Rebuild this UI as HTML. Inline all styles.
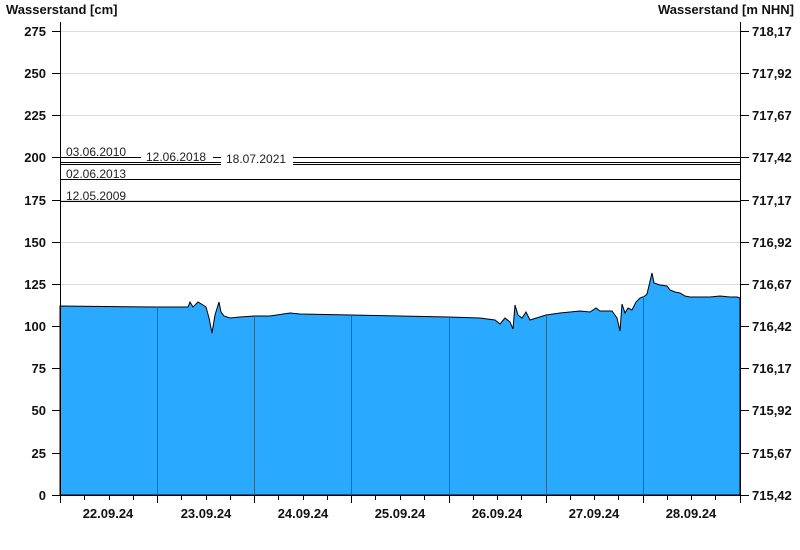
<!DOCTYPE html>
<html><head><meta charset="utf-8"><style>
html,body{margin:0;padding:0;background:#fff;}
svg{display:block;font-family:"Liberation Sans",Arial,sans-serif;}
.t{font-size:13px;font-weight:bold;fill:#111;}
.tt{font-size:13px;font-weight:bold;fill:#111;}
.l{font-size:12px;fill:#222;}
</style></head><body>
<svg width="800" height="550" viewBox="0 0 800 550">
<text x="6" y="14" class="tt">Wasserstand [cm]</text>
<text x="794" y="14" class="tt" text-anchor="end">Wasserstand [m NHN]</text>
<g stroke="#dcdcdc" stroke-width="1">
<line x1="61" y1="31.5" x2="740" y2="31.5"/><line x1="61" y1="73.5" x2="740" y2="73.5"/>
<line x1="61" y1="115.5" x2="740" y2="115.5"/><line x1="61" y1="157.5" x2="740" y2="157.5"/>
<line x1="61" y1="200.5" x2="740" y2="200.5"/><line x1="61" y1="242.5" x2="740" y2="242.5"/>
<line x1="61" y1="284.5" x2="740" y2="284.5"/>
</g>
<path fill="#29a9ff" stroke="#000" stroke-width="1" d="M60,306 L157,307 L188,307 L190,302 L193,307 L198,302 L203,305 L206,307 L209,318 L212,333 L215,315 L219,302 L221,312 L224,316 L230,318 L240,317 L254,316 L270,316 L290,313 L300,314 L351,315 L400,316 L449,317 L480,318 L495,320 L500,324 L505,318 L510,322 L513,329 L515,305 L518,315 L522,318 L526,312 L530,320 L546,315 L560,313 L580,311 L590,312 L596,308 L600,311 L612,311 L617,318 L620,331 L622,304 L625,313 L628,308 L632,310 L636,302 L640,298 L645,296 L647,294 L652,273 L654,283 L660,285 L667,286 L670,290 L675,292 L680,293 L685,296 L690,297 L700,297 L710,297 L720,296 L730,297 L737,297 L740,298 L740,495 L60,495 Z"/>
<g stroke="#1e6a99" stroke-width="1">
<line x1="157.5" y1="307" x2="157.5" y2="495"/><line x1="254.5" y1="316" x2="254.5" y2="495"/>
<line x1="351.5" y1="315" x2="351.5" y2="495"/><line x1="449.5" y1="317" x2="449.5" y2="495"/>
<line x1="546.5" y1="315" x2="546.5" y2="495"/><line x1="643.5" y1="296" x2="643.5" y2="495"/>
</g>
<g stroke="#000" stroke-width="1">
<line x1="61" y1="157.5" x2="740" y2="157.5"/>
<line x1="61" y1="162.5" x2="740" y2="162.5"/>
<line x1="61" y1="164.5" x2="740" y2="164.5"/>
<line x1="61" y1="179.5" x2="740" y2="179.5"/>
<line x1="61" y1="201.5" x2="740" y2="201.5"/>
</g>
<rect x="141" y="150" width="72" height="11" fill="#fff"/>
<rect x="221" y="153" width="72" height="12" fill="#fff"/>
<text x="66" y="156" class="l">03.06.2010</text>
<text x="146" y="161" class="l">12.06.2018</text>
<text x="226" y="163" class="l">18.07.2021</text>
<text x="66" y="178" class="l">02.06.2013</text>
<text x="66" y="200" class="l">12.05.2009</text>
<g stroke="#000" stroke-width="1">
<line x1="60.5" y1="22" x2="60.5" y2="503"/>
<line x1="740.5" y1="22" x2="740.5" y2="495"/>
<line x1="52" y1="495.5" x2="741" y2="495.5"/>
</g>
<g stroke="#000" stroke-width="1">
<path d="M52,31.5h8M52,73.5h8M52,115.5h8M52,157.5h8M52,200.5h8M52,242.5h8M52,284.5h8M52,326.5h8M52,368.5h8M52,410.5h8M52,453.5h8"/>
<path d="M741,31.5h8M741,73.5h8M741,115.5h8M741,157.5h8M741,200.5h8M741,242.5h8M741,284.5h8M741,326.5h8M741,368.5h8M741,410.5h8M741,453.5h8M741,495.5h8"/>
<path d="M157.5,495v8M254.5,495v8M351.5,495v8M449.5,495v8M546.5,495v8M643.5,495v8M740.5,495v8"/>
<path d="M84.5,495v5M109.5,495v5M133.5,495v5M181.5,495v5M206.5,495v5M230.5,495v5M278.5,495v5M303.5,495v5M327.5,495v5M375.5,495v5M400.5,495v5M424.5,495v5M473.5,495v5M497.5,495v5M521.5,495v5M570.5,495v5M594.5,495v5M618.5,495v5M667.5,495v5M691.5,495v5M715.5,495v5"/>
</g>
<g class="t" text-anchor="end">
<text x="46" y="36">275</text><text x="46" y="78">250</text><text x="46" y="120">225</text>
<text x="46" y="162">200</text><text x="46" y="205">175</text><text x="46" y="247">150</text>
<text x="46" y="289">125</text><text x="46" y="331">100</text><text x="46" y="373">75</text>
<text x="46" y="415">50</text><text x="46" y="458">25</text><text x="46" y="500">0</text>
</g>
<g class="t">
<text x="752" y="36">718,17</text><text x="752" y="78">717,92</text><text x="752" y="120">717,67</text>
<text x="752" y="162">717,42</text><text x="752" y="205">717,17</text><text x="752" y="247">716,92</text>
<text x="752" y="289">716,67</text><text x="752" y="331">716,42</text><text x="752" y="373">716,17</text>
<text x="752" y="415">715,92</text><text x="752" y="458">715,67</text><text x="752" y="500">715,42</text>
</g>
<g class="t" text-anchor="middle">
<text x="108" y="518">22.09.24</text><text x="206" y="518">23.09.24</text><text x="303" y="518">24.09.24</text>
<text x="400" y="518">25.09.24</text><text x="497" y="518">26.09.24</text><text x="594" y="518">27.09.24</text>
<text x="691" y="518">28.09.24</text>
</g>
</svg>
</body></html>
